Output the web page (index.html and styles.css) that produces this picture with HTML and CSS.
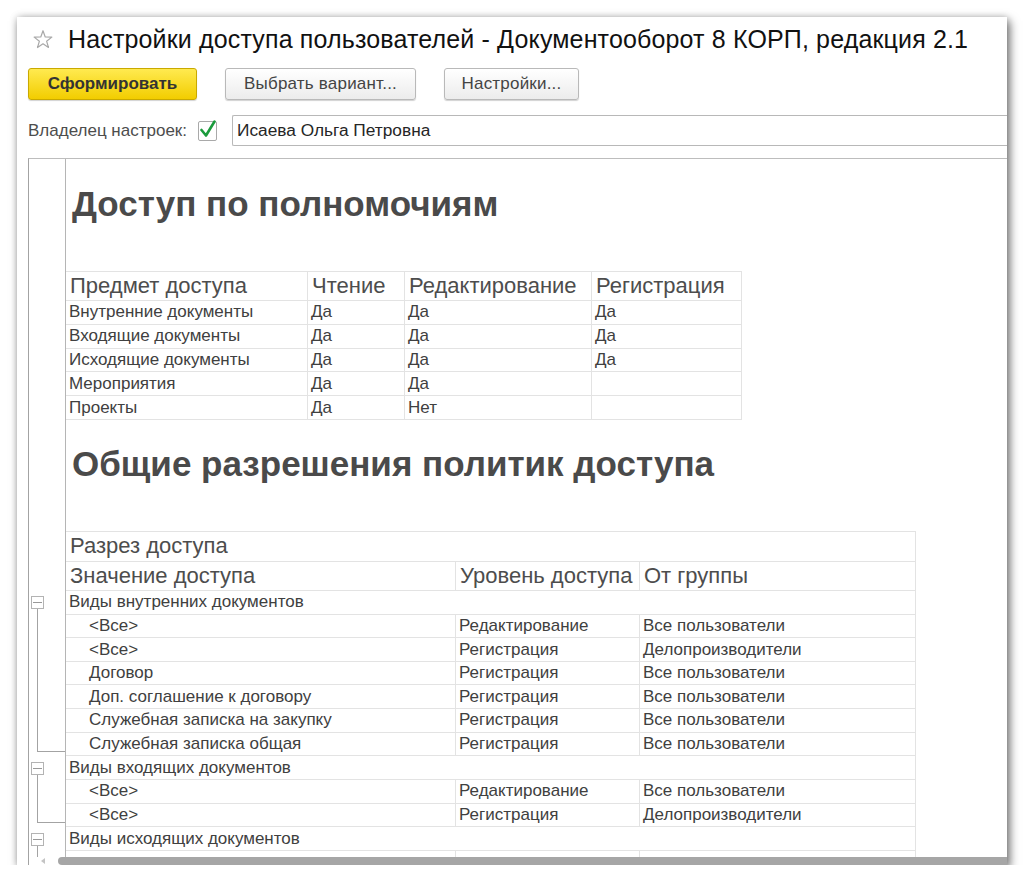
FILE: index.html
```html
<!DOCTYPE html>
<html lang="ru">
<head>
<meta charset="utf-8">
<title>Настройки доступа пользователей</title>
<link rel="stylesheet" href="styles.css">
</head>
<body>
<div class="window">
  <div class="titlebar">
    <svg class="star" viewBox="0 0 20 19" width="20" height="19"><path d="M10 0.7 L12.23 6.93 L18.85 7.13 L13.61 11.17 L15.47 17.52 L10 13.8 L4.53 17.52 L6.39 11.17 L1.15 7.13 L7.77 6.93 Z" fill="none" stroke="#a9a9a9" stroke-width="1.2" stroke-linejoin="round"/></svg>
    <h1 class="title">Настройки доступа пользователей - Документооборот 8 КОРП, редакция 2.1</h1>
  </div>
  <div class="toolbar">
    <button class="btn btn-primary">Сформировать</button>
    <button class="btn btn-variant">Выбрать вариант...</button>
    <button class="btn btn-settings">Настройки...</button>
  </div>
  <div class="owner">
    <span class="owner-label">Владелец настроек:</span>
    <span class="checkbox"><svg viewBox="0 0 19 20" width="19" height="20"><polyline points="3.5,10 8,15.5 16.5,1.5" fill="none" stroke="#1b9b3c" stroke-width="2.6" stroke-linecap="round" stroke-linejoin="round"/></svg></span>
    <div class="owner-input">Исаева Ольга Петровна</div>
  </div>
  <div class="report">
    <div class="gutter">
      <div class="g-spacer"></div>
      <div class="g-row g-open"><span class="g-box"></span></div>
      <div class="g-row g-mid"></div>
      <div class="g-row g-mid"></div>
      <div class="g-row g-mid"></div>
      <div class="g-row g-mid"></div>
      <div class="g-row g-mid"></div>
      <div class="g-row g-last"></div>
      <div class="g-row g-open"><span class="g-box"></span></div>
      <div class="g-row g-mid"></div>
      <div class="g-row g-last"></div>
      <div class="g-row g-open"><span class="g-box"></span></div>
      <div class="g-row g-mid"></div>
    </div>
    <div class="sheet">
      <h2 class="rh rh-1">Доступ по полномочиям</h2>
      <div class="t1">
        <div class="c hd">Предмет доступа</div><div class="c hd">Чтение</div><div class="c hd">Редактирование</div><div class="c hd">Регистрация</div>
        <div class="c">Внутренние документы</div><div class="c">Да</div><div class="c">Да</div><div class="c">Да</div>
        <div class="c">Входящие документы</div><div class="c">Да</div><div class="c">Да</div><div class="c">Да</div>
        <div class="c">Исходящие документы</div><div class="c">Да</div><div class="c">Да</div><div class="c">Да</div>
        <div class="c">Мероприятия</div><div class="c">Да</div><div class="c">Да</div><div class="c"></div>
        <div class="c">Проекты</div><div class="c">Да</div><div class="c">Нет</div><div class="c"></div>
      </div>
      <h2 class="rh rh-2">Общие разрешения политик доступа</h2>
      <div class="t2">
        <div class="c hd span">Разрез доступа</div>
        <div class="c hd">Значение доступа</div><div class="c hd">Уровень доступа</div><div class="c hd">От группы</div>
        <div class="c span">Виды внутренних документов</div>
        <div class="c ind">&lt;Все&gt;</div><div class="c">Редактирование</div><div class="c">Все пользователи</div>
        <div class="c ind">&lt;Все&gt;</div><div class="c">Регистрация</div><div class="c">Делопроизводители</div>
        <div class="c ind">Договор</div><div class="c">Регистрация</div><div class="c">Все пользователи</div>
        <div class="c ind">Доп. соглашение к договору</div><div class="c">Регистрация</div><div class="c">Все пользователи</div>
        <div class="c ind">Служебная записка на закупку</div><div class="c">Регистрация</div><div class="c">Все пользователи</div>
        <div class="c ind">Служебная записка общая</div><div class="c">Регистрация</div><div class="c">Все пользователи</div>
        <div class="c span">Виды входящих документов</div>
        <div class="c ind">&lt;Все&gt;</div><div class="c">Редактирование</div><div class="c">Все пользователи</div>
        <div class="c ind">&lt;Все&gt;</div><div class="c">Регистрация</div><div class="c">Делопроизводители</div>
        <div class="c span">Виды исходящих документов</div>
        <div class="c ind"></div><div class="c"></div><div class="c"></div>
      </div>
    </div>
  </div>
  <div class="hscroll"><span class="hs-arrow"></span><div class="hs-thumb"></div></div>
</div>
</body>
</html>
```

FILE: styles.css
```css
* { box-sizing: border-box; }

body {
  margin: 0;
  background: #fff;
  font-family: "Liberation Sans", Arial, sans-serif;
}

.window {
  margin: 17px 0 0 17px;
  width: 990px;
  height: 848px;
  background: #fff;
  box-shadow: 3px 4px 9px rgba(0, 0, 0, 0.5), 0 0 7px rgba(0, 0, 0, 0.22);
  display: flex;
  flex-direction: column;
  overflow: hidden;
}

/* title */
.titlebar {
  display: flex;
  align-items: center;
  height: 36px;
  padding: 8px 0 0 16px;
  flex: none;
}
.star {
  flex: none;
  margin-right: 15px;
}
.title {
  margin: 0;
  font-size: 25px;
  letter-spacing: 0.15px;
  font-weight: normal;
  line-height: 28px;
  color: #111;
  white-space: nowrap;
}

/* toolbar */
.toolbar {
  display: flex;
  gap: 28px;
  padding-left: 11px;
  margin-top: 15px;
  flex: none;
}
.btn {
  height: 32px;
  padding: 0;
  font-family: "Liberation Sans", Arial, sans-serif;
  font-size: 17px;
  color: #444;
  border: 1px solid #b9b9b9;
  border-radius: 3px;
  background: linear-gradient(#ffffff, #ececec);
  box-shadow: 0 1px 1px rgba(0, 0, 0, 0.18);
}
.btn-primary {
  width: 169px;
  font-weight: bold;
  color: #333;
  border-color: #c9a900;
  background: linear-gradient(#ffea50, #f2cd00);
}
.btn-variant { width: 191px; letter-spacing: 0.2px; }
.btn-settings { width: 135px; letter-spacing: 0.2px; }

/* owner row */
.owner {
  display: flex;
  align-items: center;
  height: 31px;
  margin-top: 15px;
  padding-left: 11px;
  flex: none;
}
.owner-label {
  font-size: 17px;
  color: #4d4d4d;
  margin-right: 11px;
  white-space: nowrap;
}
.checkbox {
  width: 19px;
  height: 20px;
  border: 1px solid #a9a9a9;
  border-radius: 2px;
  background: #fff;
  margin-right: 15px;
  flex: none;
  position: relative;
}
.checkbox svg {
  position: absolute;
  left: -1px;
  top: -2px;
}
.owner-input {
  flex: 1;
  height: 31px;
  border: 1px solid #b8b8b8;
  border-right: 0;
  border-radius: 2px 0 0 2px;
  padding-left: 4px;
  display: flex;
  align-items: center;
  font-size: 17.3px;
  color: #262626;
}

/* report */
.report {
  flex: 1;
  min-height: 0;
  margin-top: 12px;
  margin-left: 11px;
  border-top: 1px solid #bdbdbd;
  border-left: 1px solid #a3a3a3;
  display: flex;
  overflow: hidden;
}
.gutter {
  width: 37px;
  flex: none;
  border-right: 1px solid #b5b5b5;
  display: flex;
  flex-direction: column;
}
.g-spacer {
  height: 432px;
  flex: none;
}
.g-row {
  height: 23.64px;
  flex: none;
}
.g-open {
  display: flex;
  align-items: center;
  background: linear-gradient(#a3a3a3, #a3a3a3) no-repeat 8px 100% / 1px 6px;
}
.g-box {
  width: 13px;
  height: 13px;
  margin-left: 2px;
  border: 1px solid #b3b3b3;
  background: linear-gradient(#999, #999) no-repeat center / 9px 1px, #fff;
}
.g-mid {
  background: linear-gradient(#a3a3a3, #a3a3a3) no-repeat 8px 0 / 1px 100%;
}
.g-last {
  background:
    linear-gradient(#a3a3a3, #a3a3a3) no-repeat 8px 0 / 1px 19px,
    linear-gradient(#a3a3a3, #a3a3a3) no-repeat 8px 18px / 28px 1px;
}

.sheet {
  flex: 1;
  min-width: 0;
}
.rh {
  margin: 0;
  font-size: 35px;
  font-weight: bold;
  line-height: 40px;
  color: #4a4a4a;
  padding-left: 6px;
  white-space: nowrap;
}
.rh-1 { height: 112px; padding-top: 25px; }
.rh-2 { height: 111px; padding-top: 24px; }

.t1, .t2 {
  display: grid;
  border-top: 1px solid #e3e3e3;
}
.t1 {
  width: 676px;
  grid-template-columns: 242px 97px 187px 150px;
  grid-template-rows: 29px;
  grid-auto-rows: 23.8px;
}
.t2 {
  width: 850px;
  grid-template-columns: 390px 184px 276px;
  grid-template-rows: 30px 29px;
  grid-auto-rows: 23.64px;
}
.c {
  border-right: 1px solid #e3e3e3;
  border-bottom: 1px solid #e3e3e3;
  display: flex;
  align-items: center;
  padding-left: 3px;
  font-size: 17px;
  color: #404040;
  white-space: nowrap;
  overflow: hidden;
}
.c.hd {
  font-size: 22px;
  color: #4d4d4d;
  padding-left: 4px;
}
.c.span { grid-column: 1 / -1; }
.c.ind { padding-left: 23px; }

/* horizontal scroll */
.hscroll {
  height: 8px;
  flex: none;
  margin-left: 11px;
  border-left: 1px solid #a3a3a3;
  display: flex;
  align-items: center;
}
.hs-arrow {
  width: 0;
  height: 0;
  margin-left: 12px;
  border-right: 4px solid #c4c4c4;
  border-top: 3px solid transparent;
  border-bottom: 3px solid transparent;
}
.hs-thumb {
  flex: 1;
  height: 8px;
  margin-left: 13px;
  background: #a6a6a6;
  border-radius: 4px 0 0 4px;
}
```
